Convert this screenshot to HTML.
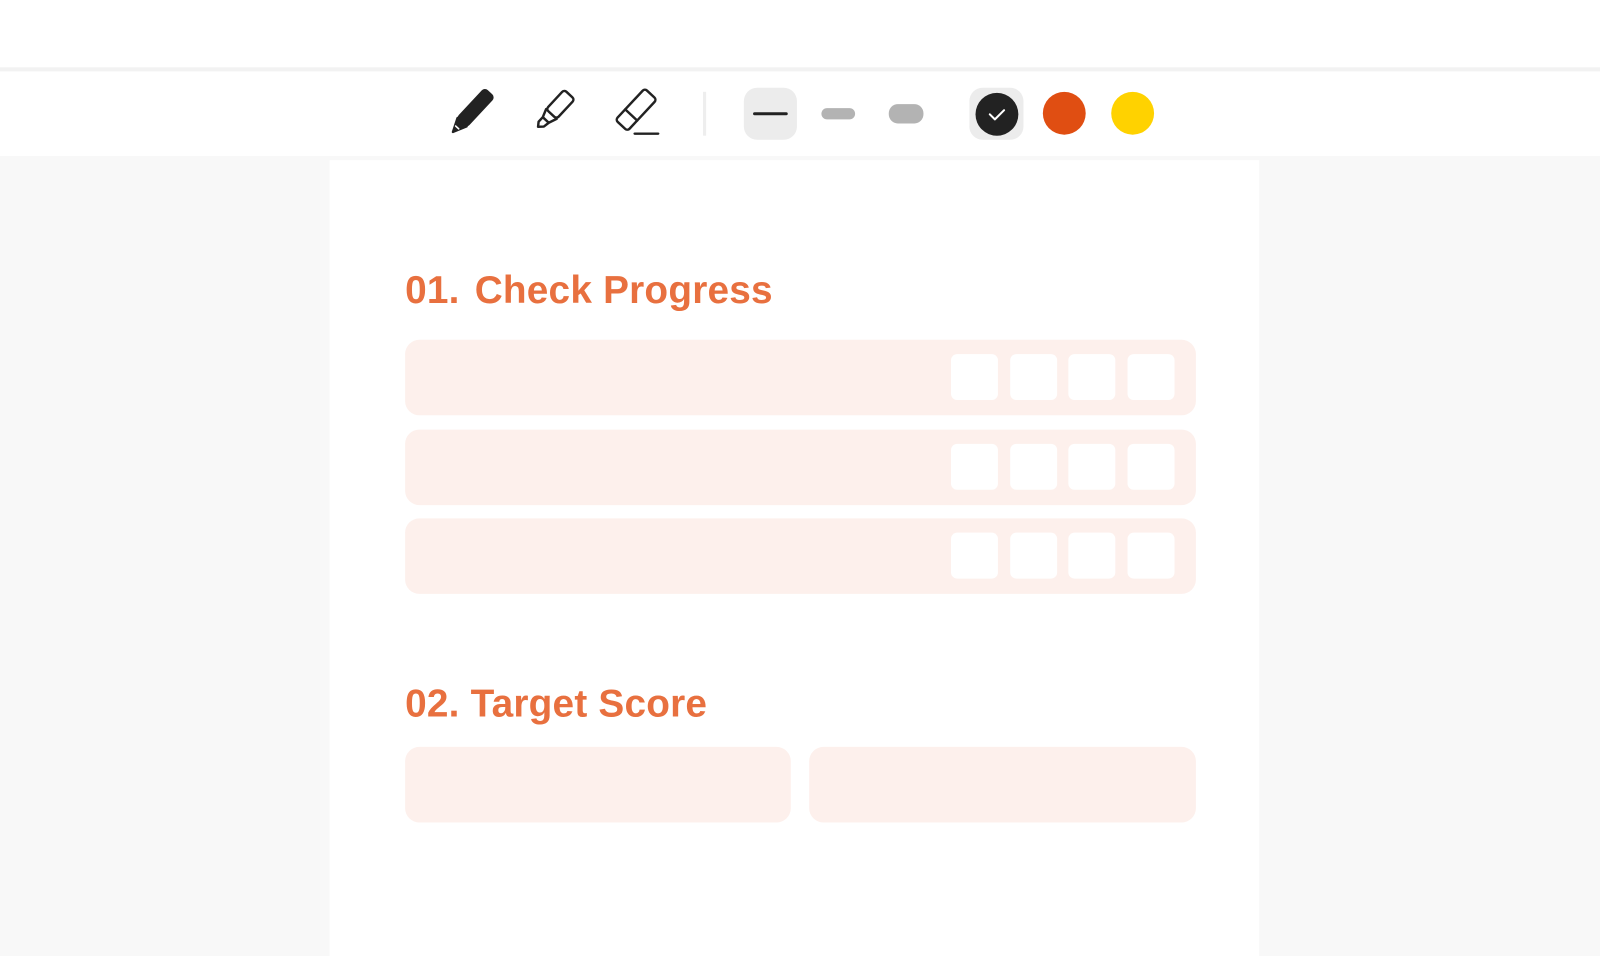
<!DOCTYPE html>
<html><head><style>
html,body{margin:0;width:1600px;height:950px;overflow:hidden;background:#f8f8f8;font-family:"Liberation Sans",sans-serif}
#w{position:absolute;left:0;top:0;width:1568px;height:931px;transform:scale(1.0204);transform-origin:0 0}
.a{position:absolute}
.row{position:absolute;left:397px;width:775px;height:74px;background:#fdf0ec;border-radius:14px}
.sq{position:absolute;top:14px;width:46px;height:45px;background:#fff;border-radius:6px}
h2{position:absolute;margin:0;left:397px;font-size:38px;font-weight:bold;color:#e8703f;letter-spacing:0.2px;white-space:nowrap}
</style></head><body><div id="w">
<div class="a" style="left:0;top:0;width:1568px;height:66px;background:#fff"></div>
<div class="a" style="left:0;top:66px;width:1568px;height:4px;background:#f2f2f2"></div>
<div class="a" style="left:0;top:70px;width:1568px;height:83px;background:#fff"></div>
<div class="a" style="left:323px;top:157px;width:911px;height:780px;background:#fff"></div>
<svg class="a" style="left:430px;top:80px" width="270" height="62" viewBox="0 0 270 62">
<g fill="none" stroke="#222" stroke-width="2.4" stroke-linejoin="round" stroke-linecap="round">
<g transform="translate(31,31) rotate(43)">
<rect x="-6" y="-27" width="12" height="39" rx="3" fill="#222"/>
<path d="M-6 12 L0 25 L6 12 Z" fill="#222"/>
<path d="M-2 19 L2 19" stroke="#fff" stroke-width="1.6"/>
</g>
<g transform="translate(111,31) rotate(43)">
<rect x="-7" y="-25" width="14" height="26" rx="3"/>
<path d="M-7 1 L-4 9 L4 9 L7 1 M-4 9 L-4 15 L-1 19 L3 15 L4 9"/>
</g>
<g transform="translate(192,29) rotate(43)">
<rect x="-8" y="-23" width="16" height="42" rx="3"/>
<path d="M-8 5 L8 5"/>
</g>
<path d="M192 51 L215 51"/>
</g>
<rect x="259" y="10" width="3" height="43" fill="#eee"/>
</svg>
<div class="a" style="left:729px;top:86px;width:52px;height:51px;background:#ececec;border-radius:13px"></div>
<div class="a" style="left:738px;top:110px;width:34px;height:3px;background:#222;border-radius:2px"></div>
<div class="a" style="left:805px;top:106px;width:33px;height:11px;background:#b3b3b3;border-radius:6px"></div>
<div class="a" style="left:871px;top:102px;width:34px;height:19px;background:#b3b3b3;border-radius:9px"></div>
<div class="a" style="left:950px;top:86px;width:53px;height:51px;background:#ececec;border-radius:13px"></div>
<div class="a" style="left:956px;top:91px;width:42px;height:42px;background:#222;border-radius:50%"></div>
<svg class="a" style="left:956px;top:91px" width="42" height="42"><path d="M14 21 L19 26 L28 17" fill="none" stroke="#fff" stroke-width="2" stroke-linecap="round" stroke-linejoin="round"/></svg>
<div class="a" style="left:1022px;top:90px;width:42px;height:42px;background:#e04e12;border-radius:50%"></div>
<div class="a" style="left:1089px;top:90px;width:42px;height:42px;background:#ffd200;border-radius:50%"></div>
<h2 style="top:264px">01.<span style="margin-left:4px"> </span>Check Progress</h2>
<div class="row" style="top:333px"><div class="sq" style="left:535px"></div><div class="sq" style="left:593px"></div><div class="sq" style="left:650px"></div><div class="sq" style="left:708px"></div></div>
<div class="row" style="top:421px"><div class="sq" style="left:535px"></div><div class="sq" style="left:593px"></div><div class="sq" style="left:650px"></div><div class="sq" style="left:708px"></div></div>
<div class="row" style="top:508px"><div class="sq" style="left:535px"></div><div class="sq" style="left:593px"></div><div class="sq" style="left:650px"></div><div class="sq" style="left:708px"></div></div>
<h2 style="top:669px">02. Target Score</h2>
<div class="row" style="top:732px;width:378px"></div>
<div class="row" style="top:732px;left:793px;width:379px"></div>
</div></body></html>
